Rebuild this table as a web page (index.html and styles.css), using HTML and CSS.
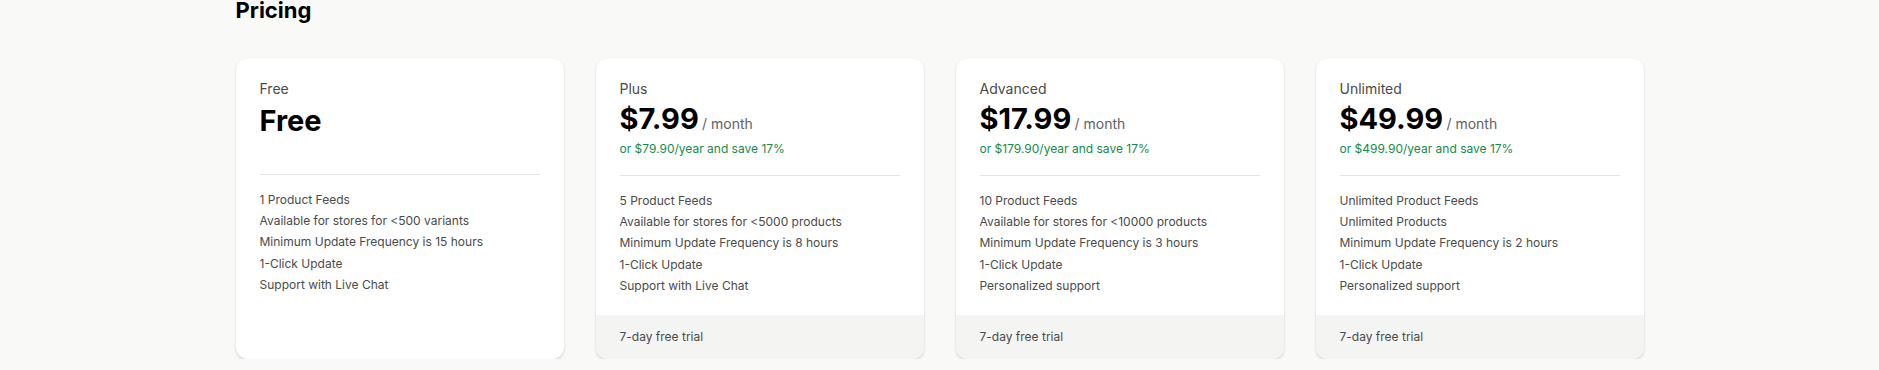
FILE: index.html
```html
<!DOCTYPE html>
<html lang="en">
<head>
<meta charset="utf-8">
<title>Pricing</title>
<link rel="stylesheet" href="styles.css">
</head>
<body>
<main class="page">
  <h1 class="title">Pricing</h1>
  <div class="plans">
    <section class="card card-free">
      <div class="body">
        <div class="head">
          <div class="label">Free</div>
          <div class="price"><span class="amount">Free</span></div>
          <div class="yearly"></div>
        </div>
        <hr class="divider">
        <ul class="features">
          <li>1 Product Feeds</li>
          <li>Available for stores for &lt;500 variants</li>
          <li>Minimum Update Frequency is 15 hours</li>
          <li>1-Click Update</li>
          <li>Support with Live Chat</li>
        </ul>
      </div>
    </section>
    <section class="card">
      <div class="body">
        <div class="head">
          <div class="label">Plus</div>
          <div class="price"><span class="amount">$7.99</span> <span class="per">/ month</span></div>
          <div class="yearly">or $79.90/year and save 17%</div>
        </div>
        <hr class="divider">
        <ul class="features">
          <li>5 Product Feeds</li>
          <li>Available for stores for &lt;5000 products</li>
          <li>Minimum Update Frequency is 8 hours</li>
          <li>1-Click Update</li>
          <li>Support with Live Chat</li>
        </ul>
      </div>
      <div class="foot">7-day free trial</div>
    </section>
    <section class="card">
      <div class="body">
        <div class="head">
          <div class="label">Advanced</div>
          <div class="price"><span class="amount">$17.99</span> <span class="per">/ month</span></div>
          <div class="yearly">or $179.90/year and save 17%</div>
        </div>
        <hr class="divider">
        <ul class="features">
          <li>10 Product Feeds</li>
          <li>Available for stores for &lt;10000 products</li>
          <li>Minimum Update Frequency is 3 hours</li>
          <li>1-Click Update</li>
          <li>Personalized support</li>
        </ul>
      </div>
      <div class="foot">7-day free trial</div>
    </section>
    <section class="card">
      <div class="body">
        <div class="head">
          <div class="label">Unlimited</div>
          <div class="price"><span class="amount">$49.99</span> <span class="per">/ month</span></div>
          <div class="yearly">or $499.90/year and save 17%</div>
        </div>
        <hr class="divider">
        <ul class="features">
          <li>Unlimited Product Feeds</li>
          <li>Unlimited Products</li>
          <li>Minimum Update Frequency is 2 hours</li>
          <li>1-Click Update</li>
          <li>Personalized support</li>
        </ul>
      </div>
      <div class="foot">7-day free trial</div>
    </section>
  </div>
</main>
</body>
</html>
```
FILE: styles.css
```css
* { box-sizing: border-box; }
html, body { margin: 0; padding: 0; }
body {
  background: #f9f9f8;
  font-family: Inter, "Noto Sans", sans-serif;
  font-size: 12px;
  line-height: 20px;
  color: #303030;
}
.page {
  width: 1408px;
  margin: 0 auto;
}
.title {
  margin: 0;
  font-size: 22px;
  line-height: 20px;
  font-weight: 700;
  color: #000;
}
.plans {
  margin-top: 38px;
  display: grid;
  grid-template-columns: repeat(4, 328px);
  gap: 32px;
}
.card {
  background: #fff;
  border-radius: 12px;
  box-shadow: 0 2px 3px rgba(0,0,0,0.12), 0 0 2px rgba(0,0,0,0.07);
  display: flex;
  flex-direction: column;
  overflow: hidden;
  height: 301px;
}
.body {
  flex: 1;
  padding: 21px 24px 19px;
}
.label {
  font-size: 14px;
  color: #4a4a4a;
}
.price {
  margin-top: 2px;
  line-height: 36px;
  height: 36px;
  white-space: nowrap;
}
.card-free .price {
  margin-top: 4px;
}
.amount {
  font-size: 29px;
  font-weight: 700;
  color: #000;
}
.per {
  font-size: 14px;
  color: #616161;
}
.yearly {
  margin-top: 2px;
  height: 20px;
  color: #168a4a;
}
.card-free .yearly {
  height: 17px;
}
.divider {
  margin: 16px 0 0;
  border: 0;
  border-top: 1px solid #e3e3e3;
}
.features {
  list-style: none;
  margin: 14px 0 0;
  padding: 0;
  color: #4a4a4a;
}
.features li {
  line-height: 21.2px;
}
.foot {
  height: 44px;
  flex: none;
  display: flex;
  align-items: center;
  padding: 0 24px;
  background: #f4f4f3;
  color: #4a4a4a;
}
```
